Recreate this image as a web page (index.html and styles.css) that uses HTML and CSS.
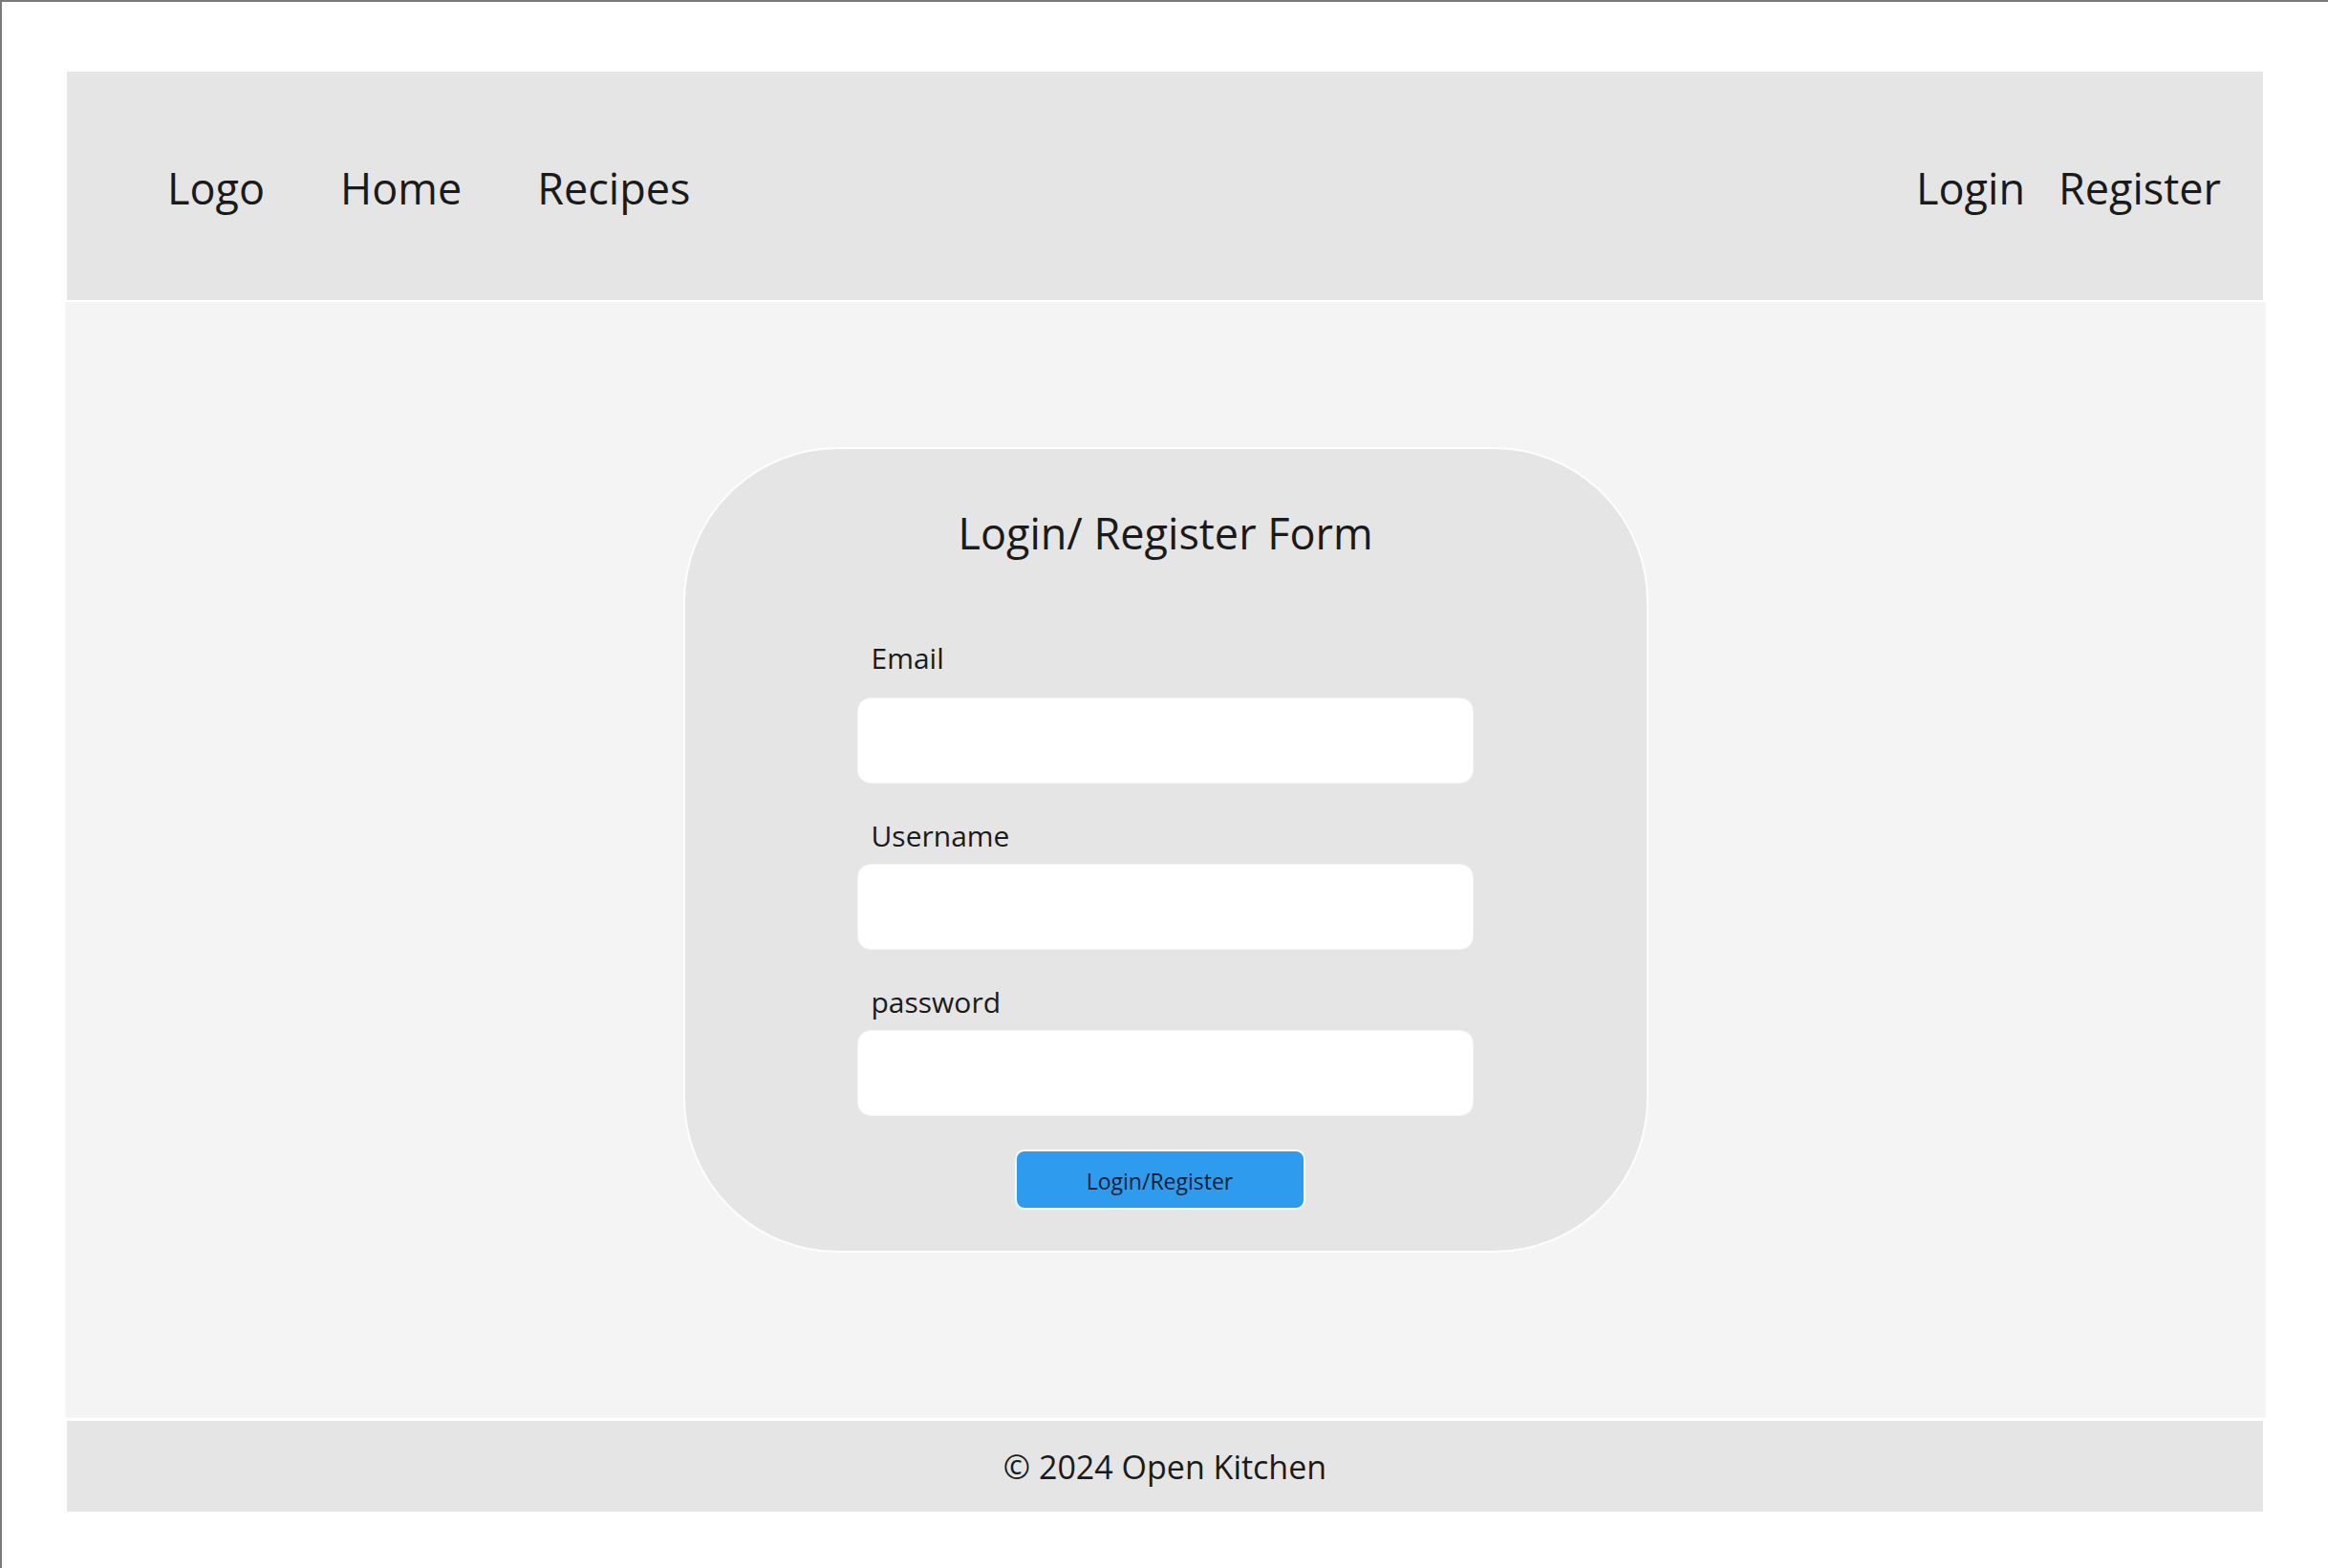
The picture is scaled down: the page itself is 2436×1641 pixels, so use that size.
FILE: index.html
```html
<!DOCTYPE html>
<html lang="en">
<head>
<meta charset="utf-8">
<title>Open Kitchen - Login / Register</title>
<link rel="stylesheet" href="styles.css">
</head>
<body>
<div class="page">
  <header class="site-header">
    <nav class="nav-left">
      <a class="nav-link" href="#">Logo</a>
      <a class="nav-link" href="#">Home</a>
      <a class="nav-link" href="#">Recipes</a>
    </nav>
    <nav class="nav-right">
      <a class="nav-link" href="#">Login</a>
      <a class="nav-link" href="#">Register</a>
    </nav>
  </header>
  <main class="site-main">
    <form class="auth-card">
      <h1 class="auth-title">Login/ Register Form</h1>
      <label class="field-label label-email" for="email">Email</label>
      <input class="field-input input-email" id="email" type="email">
      <label class="field-label" for="username">Username</label>
      <input class="field-input" id="username" type="text">
      <label class="field-label" for="password">password</label>
      <input class="field-input" id="password" type="password">
      <button class="auth-button" type="button">Login/Register</button>
    </form>
  </main>
  <footer class="site-footer">© 2024 Open Kitchen</footer>
</div>
</body>
</html>
```
FILE: styles.css
```css
* { box-sizing: border-box; }
html, body { margin: 0; padding: 0; background: #fff; }
body {
  font-family: "Open Sans", "Noto Sans", sans-serif;
  color: #1a1a1a;
  border-left: 2px solid #7a7a7a;
  border-top: 2px solid #7a7a7a;
  min-height: 1641px;
}
.page {
  display: flex;
  flex-direction: column;
  padding: 73px 0 0 66px;
  width: 2369px;
}
.site-header {
  display: flex;
  align-items: center;
  justify-content: space-between;
  height: 239px;
  margin: 0 3px 0 2px;
  background: #e5e5e5;
  padding: 3px 44px 0 105px;
}
.nav-left, .nav-right { display: flex; align-items: center; }
.nav-left { gap: 79px; }
.nav-right { gap: 35px; }
.nav-link {
  font-size: 45px;
  line-height: 61px;
  color: #1a1a1a;
  text-decoration: none;
}
.site-main {
  margin-top: 2px;
  height: 1168px;
  background: #f4f4f4;
  border: 1px solid #f7f7f7;
  display: flex;
  justify-content: center;
  align-items: flex-start;
  padding-top: 151px;
}
.auth-card {
  width: 1010px;
  height: 843px;
  background: #e5e5e5;
  border: 2px solid #fdfdfd;
  border-radius: 162px;
  display: flex;
  flex-direction: column;
  align-items: center;
  padding-top: 57px;
}
.auth-title {
  margin: 0;
  font-size: 45px;
  line-height: 61px;
  font-weight: 400;
  color: #1a1a1a;
}
.field-label {
  align-self: flex-start;
  margin-left: 195px;
  font-size: 30px;
  line-height: 41px;
  margin-top: 34px;
  color: #1a1a1a;
}
.label-email { margin-top: 80px; }
.field-input {
  display: block;
  width: 645px;
  height: 90px;
  margin-top: 9px;
  background: #fff;
  border: 1px solid #f4f4f4;
  border-radius: 14px;
  font: inherit;
  outline: none;
}
.input-email { margin-top: 21px; }
.auth-button {
  margin-top: 35px;
  margin-right: 12px;
  width: 304px;
  height: 63px;
  background: #2e9bef;
  border: 2px solid #f4fbff;
  border-radius: 10px;
  font-family: "Open Sans", "Noto Sans", sans-serif;
  font-size: 23px;
  color: #10202e;
  padding: 2px 0 0;
}
.site-footer {
  margin: 3px 3px 0 2px;
  height: 95px;
  background: #e5e5e5;
  display: flex;
  align-items: center;
  justify-content: center;
  font-size: 34px;
  color: #1a1a1a;
}
```
